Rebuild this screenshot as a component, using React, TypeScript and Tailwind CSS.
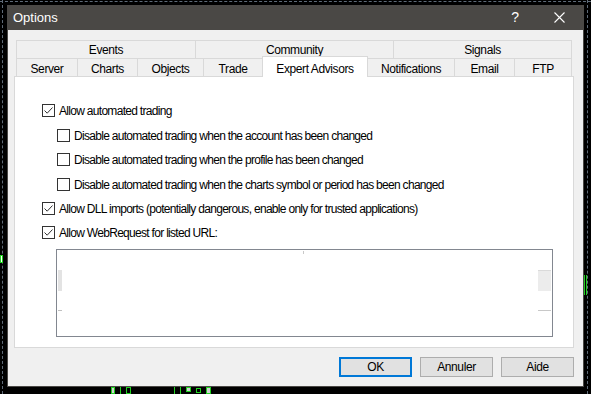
import React from "react";

// ─── checkbox ────────────────────────────────────────────────────────────────

function Check({ checked }: { checked?: boolean }) {
  return (
    <span className="w-[13px] h-[13px] border border-[#333333] bg-white flex items-center justify-center shrink-0">
      {checked && (
        <svg width="11" height="11" viewBox="0 0 11 11">
          <path d="M1.5 5.5 L4.2 8.2 L9.5 2.5" stroke="#333333" strokeWidth="1" fill="none" />
        </svg>
      )}
    </span>
  );
}

function Row({ checked, label, indent, className = "" }: { checked?: boolean; label: string; indent?: boolean; className?: string }) {
  return (
    <div className={`flex items-center h-[13px] gap-[4px] ${indent ? "pl-[42px]" : "pl-[27px]"} ${className}`}>
      <Check checked={checked} />
      <span className="leading-none whitespace-nowrap">{label}</span>
    </div>
  );
}

// ─── tabs ────────────────────────────────────────────────────────────────────

const TOP_TABS = [
  { label: "Events", w: "w-[179px]" },
  { label: "Community", w: "w-[198px]" },
  { label: "Signals", w: "w-[179px]" },
];

const BOTTOM_TABS = [
  { label: "Server", w: "w-[61px]" },
  { label: "Charts", w: "w-[60px]" },
  { label: "Objects", w: "w-[66px]" },
  { label: "Trade", w: "w-[59px]" },
  { label: "Expert Advisors", w: "w-[106px]", active: true },
  { label: "Notifications", w: "w-[86px]" },
  { label: "Email", w: "w-[60px]" },
  { label: "FTP", w: "w-[58px]" },
];

function Button({ label, primary }: { label: string; primary?: boolean }) {
  return (
    <button
      className={`w-[73px] h-[20px] flex items-center justify-center bg-[#e1e1e1] text-black ${
        primary ? "border-2 border-[#0078d7]" : "border border-[#adadad]"
      }`}
    >
      {label}
    </button>
  );
}

// ─── main ────────────────────────────────────────────────────────────────────

export default function App() {
  return (
    <div className="relative w-[591px] h-[394px] bg-black overflow-hidden font-['Liberation_Sans',Arial,sans-serif] text-[12px] tracking-[-0.7px] text-black">
      {/* chart behind the dialog */}
      <div className="absolute left-[2px] top-0 h-full border-l border-dashed border-[#5f6b78]" />
      <div className="absolute left-0 top-[1px] w-full border-t border-dashed border-[#5f6b78]" />
      <div className="absolute right-[3px] top-0 h-full border-l border-dashed border-[#5f6b78]" />
      <div className="absolute left-0 top-[255px] w-[3px] h-[8px] border border-[#20d020] bg-white" />
      <div className="absolute left-[584px] top-[275px] w-[3px] h-[20px] border-x border-[#20d020]" />
      <div className="absolute left-[111px] top-[387px] flex items-start gap-[5px]">
        <span className="w-[4px] h-[7px] border border-[#20d020] bg-[#d0d0d0]" />
        <span className="w-px h-[7px] bg-[#20d020]" />
        <span className="w-[5px] h-[7px] border border-[#20d020]" />
        <span className="ml-[38px] w-px h-[7px] bg-[#20d020]" />
        <span className="w-px h-[7px] bg-[#20d020]" />
        <span className="w-[5px] h-[5px] border border-[#20d020] bg-[#d0d0d0]" />
        <span className="w-[5px] h-[5px] mt-px border border-[#20d020]" />
        <span className="w-[5px] h-[7px] border border-[#20d020] bg-[#d0d0d0]" />
      </div>

      {/* dialog window */}
      <div className="absolute left-[7px] top-[5px] w-[577px] h-[382px] bg-[#4a4845] flex flex-col px-px pb-px">
        {/* title bar */}
        <div className="h-[25px] flex items-center text-white shrink-0">
          <span className="pl-[5px] text-[13px] tracking-normal">Options</span>
          <span className="ml-auto mr-[35px] text-[14px] tracking-normal">?</span>
          <svg className="mr-[18px]" width="11" height="11" viewBox="0 0 11 11">
            <path d="M0.5 0.5 L10.5 10.5 M10.5 0.5 L0.5 10.5" stroke="white" strokeWidth="1.1" />
          </svg>
        </div>

        {/* client */}
        <div className="flex-1 bg-[#f0f0f0] flex flex-col pt-[10px] pl-[6px] pr-[9px]">
          {/* tab rows */}
          <div className="flex flex-col px-[2px] tracking-[-0.4px]">
            <div className="flex h-[18px]">
              {TOP_TABS.map((t, i) => (
                <div
                  key={t.label}
                  className={`${t.w} h-full flex items-center justify-center border-t border-l border-[#d9d9d9] ${
                    i === TOP_TABS.length - 1 ? "border-r" : ""
                  }`}
                >
                  {t.label}
                </div>
              ))}
            </div>
            <div className="flex h-[18px] items-end">
              {BOTTOM_TABS.map((t, i) =>
                t.active ? (
                  <div
                    key={t.label}
                    className={`${t.w} h-[21px] -mb-px relative z-10 bg-white flex items-start justify-center pt-[3px] border-t border-l border-r border-[#d9d9d9]`}
                  >
                    {t.label}
                  </div>
                ) : (
                  <div
                    key={t.label}
                    className={`${t.w} h-[18px] flex items-center justify-center pt-[2px] border-t border-[#d9d9d9] ${
                      BOTTOM_TABS[i - 1]?.active ? "" : "border-l"
                    } ${i === BOTTOM_TABS.length - 1 ? "border-r" : ""}`}
                  >
                    {t.label}
                  </div>
                )
              )}
            </div>
          </div>

          {/* page */}
          <div className="h-[272px] bg-white border border-[#d9d9d9] flex flex-col pt-[27px]">
            <Row checked label="Allow automated trading" />
            <Row indent className="mt-[12px]" label="Disable automated trading when the account has been changed" />
            <Row indent className="mt-[11px]" label="Disable automated trading when the profile has been changed" />
            <Row indent className="mt-[12px]" label="Disable automated trading when the charts symbol or period has been changed" />
            <Row checked className="mt-[11px]" label="Allow DLL imports (potentially dangerous, enable only for trusted applications)" />
            <Row checked className="mt-[11px]" label="Allow WebRequest for listed URL:" />

            {/* url list */}
            <div className="ml-[41px] mt-[10px] w-[497px] h-[88px] border border-[#828790] bg-white flex flex-col px-px">
              <span className="ml-[245px] mt-px w-px h-[3px] bg-[#c8c8c8]" />
              <div className="flex justify-between mt-[16px] h-[21px]">
                <span className="w-[4px] bg-[#e3e3e3]" />
                <span className="w-[13px] bg-[#ececec] border-t border-[#dadada]" />
              </div>
              <div className="flex justify-between mt-[19px] h-px">
                <span className="w-[4px] bg-[#c0c0c0]" />
                <span className="w-[13px] bg-[#c8c8c8]" />
              </div>
            </div>
          </div>

          {/* buttons */}
          <div className="flex justify-end gap-[8px] mt-[9px] tracking-[-0.4px]">
            <Button label="OK" primary />
            <Button label="Annuler" />
            <Button label="Aide" />
          </div>
        </div>
      </div>
    </div>
  );
}
